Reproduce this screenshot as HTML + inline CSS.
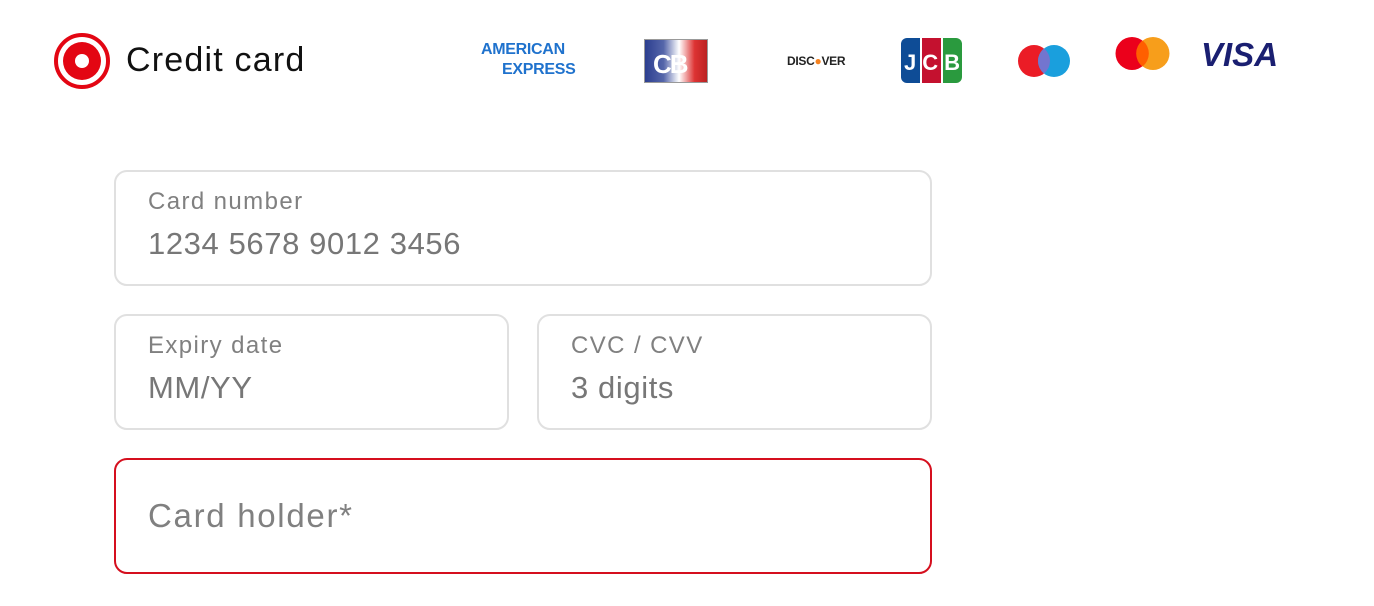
<!DOCTYPE html>
<html><head><style>
body{margin:0;width:1374px;height:606px;background:#fff;font-family:"Liberation Sans",sans-serif;position:relative;overflow:hidden}
.a{position:absolute}
.box{position:absolute;border:2px solid #e0e0e0;border-radius:13px;box-sizing:border-box}
.lbl{position:absolute;left:32px;top:16px;font-size:24px;color:#808080;letter-spacing:1.4px}
.val{position:absolute;left:32px;top:54px;font-size:31px;color:#777;letter-spacing:0.6px}
</style></head><body>
<svg class="a" style="left:53px;top:32px" width="58" height="58"><circle cx="29" cy="29" r="26" fill="none" stroke="#e30613" stroke-width="4"/><circle cx="29" cy="29" r="19" fill="#e30613"/><circle cx="29" cy="29" r="7" fill="#fff"/></svg>
<div class="a" style="left:126px;top:41px;font-size:34px;color:#111;letter-spacing:1.2px">Credit card</div>

<div class="a" style="left:481px;top:40px;color:#1f72cd;font-weight:bold;font-size:16px;line-height:20px;letter-spacing:-0.3px">AMERICAN<br><span style="margin-left:21px">EXPRESS</span></div>
<div class="a" style="left:644px;top:39px;width:64px;height:44px;background:linear-gradient(90deg,#2c3e8f 0%,#5566aa 30%,#fff 55%,#d33 80%,#b22 100%);border:1px solid #999;box-sizing:border-box"><div class="a" style="left:8px;top:9px;color:#fff;font-weight:bold;font-size:26px;letter-spacing:-2px">CB</div></div>
<div class="a" style="left:787px;top:54px;font-weight:bold;font-size:12px;color:#222;letter-spacing:-0.3px">DISC<span style="color:#f58220">●</span>VER</div>
<div class="a" style="left:901px;top:38px;width:61px;height:45px">
<div class="a" style="left:0;top:0;width:19px;height:45px;background:#0e4c96;border-radius:6px 0 0 6px"></div>
<div class="a" style="left:21px;top:0;width:19px;height:45px;background:#c4112f"></div>
<div class="a" style="left:42px;top:0;width:19px;height:45px;background:#2a9a3e;border-radius:0 6px 6px 0"></div>
<div class="a" style="left:3px;top:12px;color:#fff;font-weight:bold;font-size:22px;letter-spacing:6px">JCB</div></div>
<svg class="a" style="left:1016px;top:43px" width="56" height="36"><circle cx="18" cy="18" r="16" fill="#eb1c26"/><circle cx="38" cy="18" r="16" fill="#1a9fdd"/><path d="M28 5.5a16 16 0 0 1 0 25a16 16 0 0 1 0-25z" fill="#7375cf"/></svg>
<svg class="a" style="left:1114px;top:35px" width="58" height="37"><circle cx="18" cy="18.5" r="16.5" fill="#eb001b"/><circle cx="39" cy="18.5" r="16.5" fill="#f79e1b"/><path d="M28.5 5.5a16.5 16.5 0 0 1 0 26a16.5 16.5 0 0 1 0-26z" fill="#ff5f00"/></svg>
<div class="a" style="left:1201px;top:36px;font-weight:bold;font-style:italic;font-size:33px;color:#1a1f71;letter-spacing:0px">VISA</div>

<div class="box" style="left:114px;top:170px;width:818px;height:116px"><div class="lbl">Card number</div><div class="val">1234 5678 9012 3456</div></div>
<div class="box" style="left:114px;top:314px;width:395px;height:116px"><div class="lbl">Expiry date</div><div class="val">MM/YY</div></div>
<div class="box" style="left:537px;top:314px;width:395px;height:116px"><div class="lbl">CVC / CVV</div><div class="val">3 digits</div></div>
<div class="box" style="left:114px;top:458px;width:818px;height:116px;border-color:#d50f1e"><div class="val" style="top:37px;font-size:33px;color:#808080;letter-spacing:1.7px">Card holder*</div></div>
</body></html>
